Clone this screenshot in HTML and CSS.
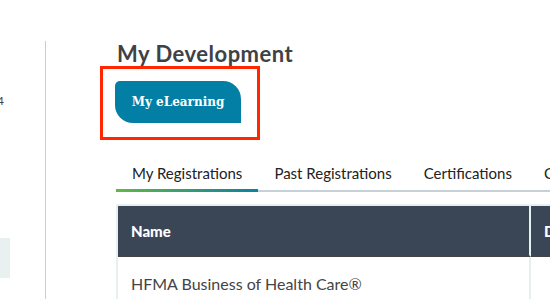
FILE: index.html
```html
<!DOCTYPE html>
<html lang="en">
  <head>
    <meta charset="UTF-8" />
    <title>My Development</title>
    <link rel="stylesheet" href="styles.css">
  </head>
  <body>
    <div class="page">
      <aside class="side">
        <div class="side_date">2024</div>
        <div class="side_box"></div>
      </aside>

      <main class="content">
        <h1 class="title">My Development</h1>
        <div class="highlight">
          <a href="#" class="btn_learning">My eLearning</a>
        </div>

        <ul class="tabs">
          <li class="active">My Registrations</li>
          <li>Past Registrations</li>
          <li>Certifications</li>
          <li>Continuing Education</li>
        </ul>

        <table class="reg_table">
          <thead>
            <tr>
              <th class="col_name">Name</th>
              <th>Date</th>
            </tr>
          </thead>
          <tbody>
            <tr>
              <td class="col_name">HFMA Business of Health Care®</td>
              <td></td>
            </tr>
          </tbody>
        </table>
      </main>
    </div>
  </body>
</html>
```

FILE: styles.css
```css
* {
  box-sizing: border-box;
}
html,
body {
  margin: 0;
  height: 100%;
  overflow: hidden;
  background: #fff;
  font-family: "Source Sans Pro", Lato, "Noto Sans", sans-serif;
  color: #222;
}
.page {
  display: flex;
  height: 100%;
  width: 550px;
  overflow: hidden;
}
.side {
  flex: 0 0 46px;
  margin-top: 41px;
  border-right: 1px solid #c9ced4;
  display: flex;
  flex-direction: column;
  overflow: hidden;
}
.side_date {
  display: flex;
  justify-content: flex-end;
  padding-right: 41px;
  margin-top: 52px;
  font-size: 12px;
  color: #444;
  white-space: nowrap;
  overflow: hidden;
}
.side_box {
  width: 10px;
  height: 40px;
  margin-top: 130px;
  background: #e8f1f0;
}
.content {
  flex: 1 0 auto;
  padding-left: 70px;
  white-space: nowrap;
}
.title {
  margin: 42px 0 0 1px;
  font-size: 22px;
  font-weight: 700;
  letter-spacing: 0.5px;
  line-height: 24px;
  color: #3f4245;
}
.highlight {
  display: inline-block;
  margin: 0 0 0 -16px;
  padding: 12px 16px 14px 12px;
  border: 3px solid #ff2600;
}
.btn_learning {
  display: block;
  width: 126px;
  height: 42px;
  line-height: 42px;
  text-align: center;
  background: #037fa5;
  color: #fff;
  font-family: "DejaVu Serif", "Liberation Serif", serif;
  font-weight: 700;
  font-size: 12px;
  text-decoration: none;
  border-radius: 5px 18px 0 18px;
}
.tabs {
  display: flex;
  margin: 23px 0 0 0;
  padding: 0;
  list-style: none;
  border-bottom: 2px solid #c6d0d8;
}
.tabs li {
  padding: 0 16px 6px 16px;
  font-size: 15px;
  line-height: 20px;
  margin-bottom: -2px;
  border-bottom: 3px solid transparent;
}
.tabs li.active {
  border-image: linear-gradient(90deg, #62b846, #0b80a4) 1;
}
.reg_table {
  margin-top: 12px;
  border-collapse: separate;
  border-spacing: 0;
  border: 2px solid #e6f1ef;
  border-bottom: 0;
  width: 500px;
}
.reg_table th {
  background: #3a4556;
  color: #fff;
  text-align: left;
  font-weight: 900;
  font-size: 15px;
  height: 51px;
  padding: 0 13px;
  border-bottom: 2px solid #454545;
}
.reg_table td {
  height: 44px;
  padding: 17px 13px 0 13px;
  font-size: 16px;
  color: #444;
  vertical-align: top;
}
.reg_table .col_name {
  width: 413px;
  border-right: 2px solid #e6f1ef;
}
```
